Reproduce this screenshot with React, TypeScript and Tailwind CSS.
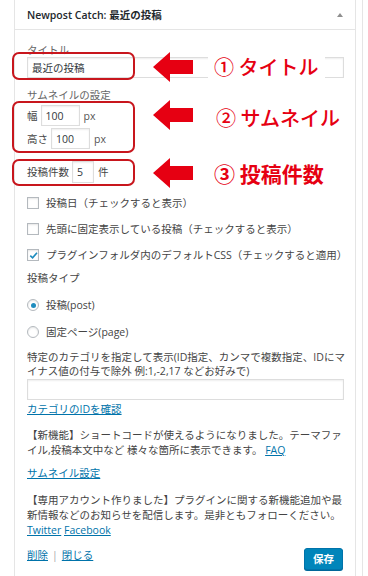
import React from "react";

const FONT = '"Open Sans", "Noto Sans CJK JP", sans-serif';
const JP = '"Noto Sans CJK JP", "Open Sans", sans-serif';

function Arrow() {
  return (
    <svg width="40" height="30" viewBox="0 0 40 30">
      <polygon points="0,15 17,0 17,8 40,8 40,22 17,22 17,30" fill="#e60012" />
    </svg>
  );
}

function Checkbox({ checked }: { checked?: boolean }) {
  return (
    <span className="relative flex h-[12px] w-[12px] shrink-0 items-center justify-center border border-[#b4b9be] bg-white shadow-[inset_0_1px_2px_rgba(0,0,0,0.1)]">
      {checked && (
        <svg width="11" height="11" viewBox="0 0 12 12" className="absolute">
          <path d="M2.5 6.2 L5 8.6 L9.8 3" fill="none" stroke="#1e8cbe" strokeWidth="1.8" />
        </svg>
      )}
    </span>
  );
}

function Radio({ checked }: { checked?: boolean }) {
  return (
    <span className="flex h-[12px] w-[12px] shrink-0 items-center justify-center rounded-full border border-[#b4b9be] bg-white shadow-[inset_0_1px_2px_rgba(0,0,0,0.1)]">
      {checked && <span className="h-[5px] w-[5px] rounded-full bg-[#1e8cbe]" />}
    </span>
  );
}

function Input({ w, h, value }: { w: string; h: string; value?: string }) {
  return (
    <div
      className={`${w} ${h} flex items-center border border-[#ddd] bg-white pl-[4px] text-[#32373c] shadow-[inset_0_1px_2px_rgba(0,0,0,0.07)]`}
    >
      {value}
    </div>
  );
}

export default function App() {
  return (
    <div
      className="relative flex h-[576px] w-[368px] overflow-hidden bg-white text-[10.5px] leading-[14px] text-[#444]"
      style={{ fontFamily: FONT }}
    >
      <div className="ml-[14px] flex h-full w-[342px] flex-col border-x border-[#e5e5e5]">
        <div className="flex h-[30px] shrink-0 items-center justify-between border-b border-[#e5e5e5] pl-[12px] pr-[12px]">
          <span className="text-[10.5px] font-semibold text-[#23282d]">Newpost Catch: 最近の投稿</span>
          <span className="h-0 w-0 border-x-[3px] border-b-[4px] border-x-transparent border-b-[#8f8f8f]" />
        </div>
        <div className="flex flex-col px-[12px]">
          <div className="mt-[13px] text-[#666]">タイトル</div>
          <Input w="w-[317px]" h="h-[21px]" value="最近の投稿" />
          <div className="mt-[10px] text-[#666]">サムネイルの設定</div>
          <div className="mt-[3px] flex items-center">
            <span>幅</span>
            <div className="ml-[3px]">
              <Input w="w-[39px]" h="h-[21px]" value="100" />
            </div>
            <span className="ml-[4px] text-[#555]">px</span>
          </div>
          <div className="mt-[2px] flex items-center">
            <span>高さ</span>
            <div className="ml-[3px]">
              <Input w="w-[39px]" h="h-[21px]" value="100" />
            </div>
            <span className="ml-[4px] text-[#555]">px</span>
          </div>
          <div className="mt-[12px] flex items-center">
            <span>投稿件数</span>
            <div className="ml-[3px]">
              <Input w="w-[22px]" h="h-[22px]" value="5" />
            </div>
            <span className="ml-[4px]">件</span>
          </div>
          <div className="mt-[13px] flex items-center gap-[7px]">
            <Checkbox />
            <span>投稿日（チェックすると表示）</span>
          </div>
          <div className="mt-[12px] flex items-center gap-[7px]">
            <Checkbox />
            <span>先頭に固定表示している投稿（チェックすると表示）</span>
          </div>
          <div className="mt-[12px] flex items-center gap-[7px]">
            <Checkbox checked />
            <span className="whitespace-nowrap">プラグインフォルダ内のデフォルトCSS（チェックすると適用）</span>
          </div>
          <div className="mt-[9px]">投稿タイプ</div>
          <div className="mt-[13px] flex items-center gap-[7px]">
            <Radio checked />
            <span>投稿(post)</span>
          </div>
          <div className="mt-[13px] flex items-center gap-[7px]">
            <Radio />
            <span>固定ページ(page)</span>
          </div>
          <div className="mt-[11px] whitespace-nowrap">
            特定のカテゴリを指定して表示(ID指定、カンマで複数指定、IDにマ
            <br />
            イナス値の付与で除外 例:1,-2,17 などお好みで)
          </div>
          <div className="mt-[1px]">
            <Input w="w-[317px]" h="h-[21px]" />
          </div>
          <div className="mt-[2px]">
            <span className="text-[#0073aa] underline">カテゴリのIDを確認</span>
          </div>
          <div className="mt-[12px] whitespace-nowrap leading-[15px]">
            【新機能】ショートコードが使えるようになりました。テーマファ
            <br />
            イル,投稿本文中など 様々な箇所に表示できます。 <span className="text-[#0073aa] underline">FAQ</span>
          </div>
          <div className="mt-[8px]">
            <span className="text-[#0073aa] underline">サムネイル設定</span>
          </div>
          <div className="mt-[13px] whitespace-nowrap leading-[15px]">
            【専用アカウント作りました】プラグインに関する新機能追加や最
            <br />
            新情報などのお知らせを配信します。是非ともフォローください。
            <br />
            <span className="text-[#0073aa] underline">Twitter</span>{" "}
            <span className="text-[#0073aa] underline">Facebook</span>
          </div>
          <div className="mt-[10px] flex items-start justify-between pr-[0px]">
            <div className="flex items-center">
              <span className="text-[#0073aa] underline">削除</span>
              <span className="mx-[4px] text-[#aaa]">|</span>
              <span className="text-[#0073aa] underline">閉じる</span>
            </div>
            <button className="flex h-[22px] w-[39px] items-center justify-center rounded-[3px] border border-[#0073aa] bg-[#0085ba] text-[10.5px] font-bold text-white shadow-[0_1px_0_#006799]">
              保存
            </button>
          </div>
        </div>
      </div>
      <div className="ml-[6px] h-full border-l border-[#e5e5e5]" />

      {/* annotations */}
      <div className="absolute left-[12px] top-[52px] h-[28px] w-[123px] rounded-[7px] border-2 border-[#c8161d]" />
      <div className="absolute left-[12px] top-[101px] h-[52px] w-[123px] rounded-[7px] border-2 border-[#c8161d]" />
      <div className="absolute left-[12px] top-[159px] h-[27px] w-[123px] rounded-[7px] border-2 border-[#c8161d]" />

      <div className="absolute left-[153px] top-[52px]">
        <Arrow />
      </div>
      <div className="absolute left-[153px] top-[100px]">
        <Arrow />
      </div>
      <div className="absolute left-[153px] top-[158px]">
        <Arrow />
      </div>

      <div
        className="absolute left-[208px] top-[54px] bg-white px-[6px] text-[20px] font-medium leading-[26px] text-[#e60012]"
        style={{ fontFamily: JP }}
      >
        ① タイトル
      </div>
      <div
        className="absolute left-[210px] top-[105px] bg-white px-[6px] text-[20px] font-medium leading-[26px] text-[#e60012]"
        style={{ fontFamily: JP }}
      >
        ② サムネイル
      </div>
      <div
        className="absolute left-[208px] top-[160px] bg-white px-[6px] text-[21px] font-bold leading-[26px] text-[#e60012]"
        style={{ fontFamily: JP }}
      >
        ③ 投稿件数
      </div>
    </div>
  );
}
